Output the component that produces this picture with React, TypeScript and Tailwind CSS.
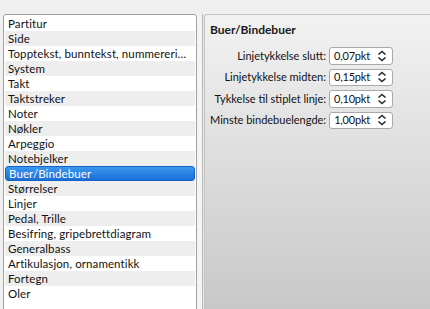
import React from "react";

const items = [
  "Partitur",
  "Side",
  "Topptekst, bunntekst, nummereri…",
  "System",
  "Takt",
  "Taktstreker",
  "Noter",
  "Nøkler",
  "Arpeggio",
  "Notebjelker",
  "Buer/Bindebuer",
  "Størrelser",
  "Linjer",
  "Pedal, Trille",
  "Besifring, gripebrettdiagram",
  "Generalbass",
  "Artikulasjon, ornamentikk",
  "Fortegn",
  "Oler",
];

const fields = [
  ["Linjetykkelse slutt:", "0,07pkt"],
  ["Linjetykkelse midten:", "0,15pkt"],
  ["Tykkelse til stiplet linje:", "0,10pkt"],
  ["Minste bindebuelengde:", "1,00pkt"],
];

function UpDown() {
  return (
    <svg width="10" height="12" viewBox="0 0 10 12" className="shrink-0">
      <path d="M1.5 4.5 L5 1.5 L8.5 4.5" fill="none" stroke="#2b2b2b" strokeWidth="1.6" />
      <path d="M1.5 7.5 L5 10.5 L8.5 7.5" fill="none" stroke="#2b2b2b" strokeWidth="1.6" />
    </svg>
  );
}

export default function App() {
  return (
    <div
      className="w-[430px] h-[309px] overflow-hidden bg-[#f0f0f0] flex pt-[14px] text-[11.5px] text-[#111111]"
      style={{ fontFamily: 'Lato, "Noto Sans", sans-serif' }}
    >
      <div className="ml-[3px] w-[194px] h-[310px] shrink-0 border border-[#a0a0a0] rounded-t-[3px] bg-white pt-[1px] px-[1px]">
        {items.map((t, i) => {
          const sel = t === "Buer/Bindebuer";
          return (
            <div
              key={t}
              className={
                "h-[15px] pl-[3px] whitespace-nowrap tracking-[0.1px] " +
                (sel
                  ? "bg-gradient-to-b from-[#3a98ee] to-[#1a6fd8] text-white rounded-[3px] border border-[#1463c4] leading-[13px] pl-[2px]"
                  : i % 2 === 1
                  ? "bg-[#eeeeee] leading-[15px]"
                  : "bg-white leading-[15px]")
              }
            >
              {t}
            </div>
          );
        })}
      </div>
      <div className="w-[7px] shrink-0 h-full flex">
        <div className="w-[5px] bg-[#f4f4f4]" />
        <div className="w-[1px] bg-[#b8b8b8]" />
        <div className="w-[1px] bg-[#e8e8e8]" />
      </div>
      <div className="flex-1 h-[296px] border-l border-t border-[#c4c4c4] rounded-tl-[3px] bg-gradient-to-b from-[#f2f2f2] to-[#c8c8c8] pl-[5px] pt-[7px]">
        <div className="font-bold text-[12px] leading-[16px] text-[#1a1a1a]">Buer/Bindebuer</div>
        <div className="mt-[9px] flex flex-col gap-[4px] w-[183px] text-[11px]">
          {fields.map(([l, v]) => (
            <div key={l} className="flex items-center justify-end gap-[3px] h-[17.5px]">
              <span className="whitespace-nowrap">{l}</span>
              <div className="w-[64px] h-[17.5px] bg-white border border-[#a9a9a9] rounded-[3px] flex items-center justify-between pl-[4px] pr-[5px]">
                <span className="tracking-[-0.2px]">{v}</span>
                <UpDown />
              </div>
            </div>
          ))}
        </div>
      </div>
    </div>
  );
}
